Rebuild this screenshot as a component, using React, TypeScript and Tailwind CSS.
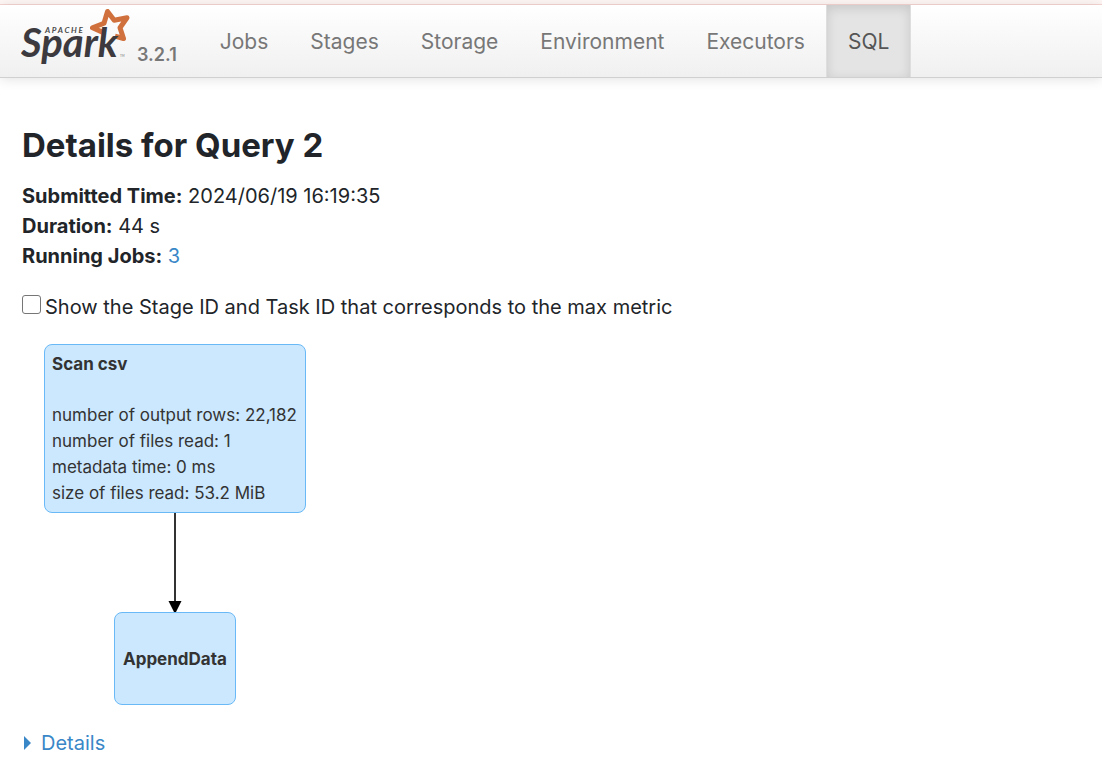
import React from "react";

const tabs = ["Jobs", "Stages", "Storage", "Environment", "Executors", "SQL"];

const scanMetrics = [
  "number of output rows: 22,182",
  "number of files read: 1",
  "metadata time: 0 ms",
  "size of files read: 53.2 MiB",
];

function SparkLogo() {
  return (
    <svg width="112" height="62" viewBox="0 0 112 62" role="img" aria-label="Apache Spark">
      <path
        d="M82 27.4 L71.5 22.8 L83 18.2 L86.5 6.5 L93.2 15.2 L106 12.8 L99 22.8 L102.5 33.5 L94 31.2"
        fill="none"
        stroke="#d0703c"
        strokeWidth="5"
        strokeLinejoin="round"
      />
      <text x="24" y="28" fill="#4a4a4a" fontFamily="Lato, sans-serif" fontSize="8" fontWeight="700" fontStyle="italic">
        A P A C H E
      </text>
      <text x="0" y="52" fill="#3c3a3e" fontFamily="Lato, sans-serif" fontSize="40" fontWeight="700" fontStyle="italic">
        Spark
      </text>
      <text x="99" y="52" fill="#777777" fontFamily="Lato, sans-serif" fontSize="3">
        TM
      </text>
    </svg>
  );
}

export default function App() {
  return (
    <div className="min-h-screen bg-white font-['Inter',sans-serif] text-xl leading-[30px] text-[#212529]">
      <div className="h-[5px] border-b border-[#f6d6d2] bg-[#fef7f5]" />
      <header className="flex h-[73px] items-stretch border-b border-[#d0d0d0] bg-linear-to-b from-white to-[#f0f0f0] pl-[21px] shadow-[0_1px_12px_rgba(0,0,0,0.12)]">
        <a href="#home" className="flex items-start">
          <SparkLogo />
          <span className="ml-1 mt-9 text-lg font-semibold text-[#777777]">3.2.1</span>
        </a>
        <nav className="ml-[22px] flex text-[21px]">
          {tabs.map((tab) =>
            tab === "SQL" ? (
              <a
                key={tab}
                href="#sql"
                aria-current="page"
                className="flex items-center border-x border-[#dedede] bg-[#e4e4e4] px-[21px] pt-px text-[#555555] shadow-[inset_0_3px_11px_rgba(0,0,0,0.13)]"
              >
                {tab}
              </a>
            ) : (
              <a key={tab} href={`#${tab.toLowerCase()}`} className="flex items-center border-x border-transparent px-5 pt-px text-[#777777]">
                {tab}
              </a>
            ),
          )}
        </nav>
      </header>

      <main className="px-[22px] pt-[46px] pb-6">
        <h1 className="text-[33px] leading-[42px] font-bold">Details for Query 2</h1>
        <ul className="mt-[15px]">
          <li>
            <strong className="font-bold">Submitted Time:</strong> 2024/06/19 16:19:35
          </li>
          <li>
            <strong className="font-bold">Duration:</strong> 44 s
          </li>
          <li>
            <strong className="font-bold">Running Jobs:</strong>{" "}
            <a href="#job-3" className="text-[#3a87c8]">
              3
            </a>
          </li>
        </ul>

        <div className="mt-[21px] flex items-start">
          <input
            id="stage-task"
            type="checkbox"
            className="mt-[3px] mr-1 size-[19px] shrink-0 appearance-none rounded-[3px] border border-[#767676] bg-white checked:bg-[#3a87c8]"
          />
          <label htmlFor="stage-task">Show the Stage ID and Task ID that corresponds to the max metric</label>
        </div>

        <div className="mt-[22px] ml-[22px] flex w-fit flex-col items-center text-[17px] leading-[26px] text-[#333333]">
          <section className="rounded-lg border border-[#69b9f7] bg-[#cbe8fe] pt-[6px] pr-2 pb-[6px] pl-[7px]">
            <h2 className="mb-[25px] font-bold">Scan csv</h2>
            {scanMetrics.map((metric) => (
              <p key={metric}>{metric}</p>
            ))}
          </section>
          <svg width="14" height="99" viewBox="0 0 14 99" aria-hidden="true">
            <path d="M7 0V90" stroke="#333333" strokeWidth="2" />
            <path d="M0.5 88H13.5L8 99H6Z" fill="#000000" />
          </svg>
          <section className="flex h-[93px] items-center rounded-lg border border-[#69b9f7] bg-[#cbe8fe] px-2">
            <h2 className="font-bold">AppendData</h2>
          </section>
        </div>

        <button type="button" className="mt-[23px] flex items-center text-[#3a87c8]">
          <svg width="10" height="16" viewBox="0 0 10 16" className="mr-[9px]" aria-hidden="true">
            <path d="M2 1L9 8L2 15Z" fill="#3a87c8" />
          </svg>
          Details
        </button>
      </main>
    </div>
  );
}
